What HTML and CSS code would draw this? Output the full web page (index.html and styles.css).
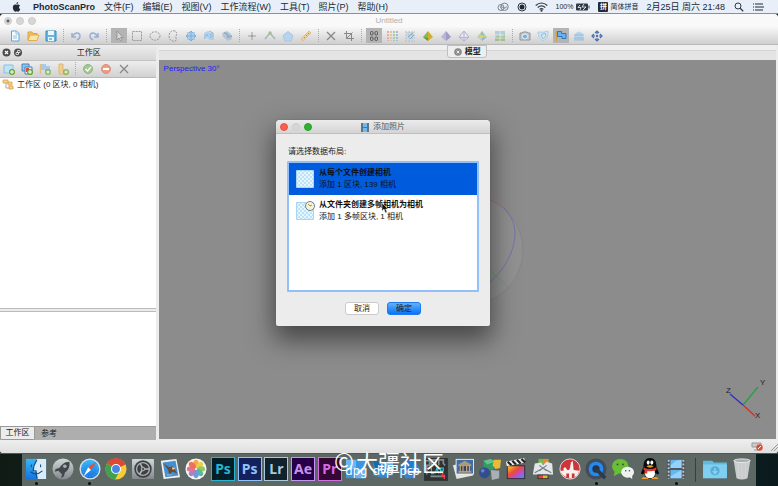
FILE: index.html
```html
<!DOCTYPE html>
<html lang="zh-CN">
<head>
<meta charset="utf-8">
<title>PhotoScanPro</title>
<link rel="stylesheet" href="styles.css">
</head>
<body>
<svg class="defs" aria-hidden="true">
  <defs>
    <pattern id="check" width="4" height="4" patternUnits="userSpaceOnUse"><rect width="4" height="4" fill="#e6f6fe"/><path d="M0 0h2v2H0zM2 2h2v2H2z" fill="#bde2f8"/></pattern>
    <linearGradient id="silver" x2="0" y2="1"><stop stop-color="#d3d7da"/><stop offset="1" stop-color="#81878b"/></linearGradient>
    <linearGradient id="sky" x2="0" y2="1"><stop stop-color="#35b8f8"/><stop offset="1" stop-color="#1673df"/></linearGradient>
    <linearGradient id="rain" x2="1" y2="1"><stop stop-color="#f3d02c"/><stop offset=".4" stop-color="#ed4937"/><stop offset=".7" stop-color="#b44fd6"/><stop offset="1" stop-color="#3c9af2"/></linearGradient>
    <symbol id="plus" viewBox="0 0 6 6"><circle cx="3" cy="3" r="3" fill="#68a832"/><path d="M3 1v4M1 3h4" stroke="#fff"/></symbol>
  </defs>
</svg>
<div class="desktop">
  <header class="menubar">
    <svg class="apple" viewBox="0 0 10 11"><path d="M6.800 0C5.600.2 4.900 1.100 5 2.300 6.100 2.300 6.900 1.300 6.800 0ZM8.900 3.700C7.700 2.200 6.200 2.600 5.200 3 4 2.500 2.600 2.400 1.600 3.600.2 5.400 1 8.600 2.700 10.300 3.500 11 4.200 10.600 5.200 10.300 6.200 10.600 7 11 7.800 10.200 8.400 9.600 9 8.700 9.200 8 7.400 7.200 7.300 4.800 8.900 3.700Z" fill="#222b36"/></svg>
    <nav class="menus">
      <a class="app" href="#">PhotoScanPro</a><a href="#">文件(F)</a><a href="#">编辑(E)</a><a href="#">视图(V)</a><a href="#">工作流程(W)</a><a href="#">工具(T)</a><a href="#">照片(P)</a><a href="#">帮助(H)</a>
    </nav>
    <div class="tray">
      <svg width="12" height="10" viewBox="0 0 12 10" fill="none" stroke="#7b838d"><circle cx="4" cy="5.500" r="3"/><circle cx="7.500" cy="4.800" r="3.700"/><path d="M3 5.500q1-2 3 0t4-1"/></svg>
      <svg width="10" height="10" viewBox="0 0 10 10"><circle cx="5" cy="5" r="4" fill="none" stroke="#303844"/><circle cx="5" cy="5" r="2.500" fill="#202833"/></svg>
      <svg width="13" height="10" viewBox="0 0 13 10" fill="none" stroke="#303844" stroke-width="1.200"><path d="M.7 3.500q5.800-5 11.600 0M2.700 5.500q3.800-3.300 7.600 0M4.600 7.400q1.900-1.600 3.800 0"/><circle cx="6.500" cy="8.700" r=".5"/></svg>
      <span class="battery">100%<svg width="14" height="8" viewBox="0 0 14 8"><rect y=".5" width="12" height="7" rx="1" fill="#303844"/><path d="M13 2.500v3" stroke="#303844"/><path d="M4 2 2 4.500h3L4 7M8 1 6 4h4L7 7" stroke="#fff" fill="none" stroke-width=".8"/></svg></span>
      <span class="ime"><b>拼</b>简体拼音</span>
      <time>2月25日 周六 21:48</time>
      <svg class="search" width="10" height="10" viewBox="0 0 10 10" fill="none" stroke="#303844"><circle cx="4" cy="4" r="3"/><path d="m6.200 6.200 3 3" stroke-width="1.300"/></svg>
      <svg width="12" height="10" viewBox="0 0 12 10" stroke="#202833" stroke-width="1.200"><path d="M3 2h8M3 5h9M3 8h8M1 2h1M1 5h1M1 8h1"/></svg>
    </div>
  </header>

  <main class="window">
    <div class="titlebar"><div class="lights"><i class="edited"></i><i></i><i></i></div><h1>Untitled</h1></div>
    <div class="toolbar" role="toolbar">
      <button aria-label="新建"><svg viewBox="0 0 12 12"><path d="M2.500 1h5L10 3.500V11H2.500z" fill="#f3fbff" stroke="#63a5c9"/><path d="M7 1v3h3M4 6h4M4 8h4" stroke="#8fc4df" fill="none"/></svg></button>
      <button aria-label="打开"><svg viewBox="0 0 12 12"><path d="M1 10V2h4l1 1.500h4V6" fill="#eebe65" stroke="#d9a343"/><path d="M1 10.500 3 5h9l-2 5.500z" fill="#fae5a9" stroke="#dfad52"/></svg></button>
      <button aria-label="保存"><svg viewBox="0 0 12 12"><path d="M1 1h10v10H1z" fill="#6bb5dd" stroke="#3b8cbc"/><path d="M3 1h6v4H3zM3 7h6v4H3z" fill="#eaf7ff"/><path d="M4 9h3" stroke="#307ca8"/></svg></button>
      <i class="sep"></i>
      <button aria-label="撤销"><svg viewBox="0 0 12 12"><path d="M2 3v4h4M2.500 6.500C5 2 10 2 10 6c0 2-1 3-3 4" fill="none" stroke="#97afd8" stroke-width="1.500"/></svg></button>
      <button aria-label="重做"><svg viewBox="0 0 12 12"><path d="M10 3v4H6M9.500 6.500C7 2 2 2 2 6c0 2 1 3 3 4" fill="none" stroke="#97afd8" stroke-width="1.500"/></svg></button>
      <i class="sep"></i>
      <button class="on" aria-label="选择"><svg viewBox="0 0 12 12"><path d="M4 1v9l2-2 1.500 3L9 10 7.500 7.500H10z" fill="#dadada" stroke="#8b8b8b" stroke-width=".8"/></svg></button>
      <button aria-label="矩形"><svg viewBox="0 0 12 12"><path d="M1.500 1.500h9v9h-9z" fill="none" stroke="#999" stroke-dasharray="2 1"/></svg></button>
      <button aria-label="椭圆"><svg viewBox="0 0 12 12"><ellipse cx="6" cy="6" rx="5" ry="4.200" fill="none" stroke="#999" stroke-dasharray="2 1"/></svg></button>
      <button aria-label="套索"><svg viewBox="0 0 12 12"><path d="M8 1C4 0 2 3 2 6s2 6 6 5c3-1 0-3 1-5s1-4-1-5Z" fill="none" stroke="#999" stroke-dasharray="2 1"/></svg></button>
      <button class="dim" aria-label="移动"><svg viewBox="0 0 12 12"><path d="M2 2h8v8H2z" fill="#9fc9ef"/><path d="M6 1v10M1 6h10M4 3l2-2 2 2M4 9l2 2 2-2M3 4 1 6l2 2M9 4l2 2-2 2" fill="none" stroke="#6a9fd0"/></svg></button>
      <button class="dim" aria-label="旋转"><svg viewBox="0 0 12 12"><path d="m1 3 4-2 6 5v4H7L1 6z" fill="#a3cdf0"/><path d="M2 9q-1-4 3-4M10 3q1 4-3 4M6 1l4 2-3 2" fill="none" stroke="#79a6cf"/></svg></button>
      <button class="dim" aria-label="缩放"><svg viewBox="0 0 12 12"><path d="m1 3 5-2 4 3 1 5-4 2-5-4z" fill="#a7c0d8"/><path d="M3 3q4 0 4 4l4-1" fill="none" stroke="#7f9bb2" stroke-width="1.500"/></svg></button>
      <i class="sep"></i>
      <button aria-label="点"><svg viewBox="0 0 12 12"><path d="M6 2v3M6 7v3M2 6h3M7 6h3" stroke="#a0a0a0"/><circle cx="6" cy="6" r="1" fill="#888"/></svg></button>
      <button aria-label="折线"><svg viewBox="0 0 12 12"><path d="m1 9 5-6 5 6" fill="none" stroke="#9fb7b9" stroke-width="1.400"/><circle cx="6" cy="3" r="1.700" fill="#a6bd9a"/></svg></button>
      <button aria-label="多边形"><svg viewBox="0 0 12 12"><path d="m6 1.500 5 4L9 11H3L1 5.500z" fill="#b6d4ef" stroke="#a5c7e0"/></svg></button>
      <button aria-label="标尺"><svg viewBox="0 0 12 12"><path d="m1 9 8-8 2 2-8 8z" fill="#efd092" stroke="#e3bd80"/><path d="m4 7 1 1M6 5l1 1M8 3l1 1" stroke="#b98e44"/></svg></button>
      <i class="sep"></i>
      <button aria-label="删除"><svg viewBox="0 0 12 12"><path d="m2 2 8 8M10 2 2 10" stroke="#888" stroke-width="1.300"/></svg></button>
      <button aria-label="裁剪"><svg viewBox="0 0 12 12"><path d="M3.500 1v7.500H11M1 3.500h7.500V11M3.500 8.500l6-6" fill="none" stroke="#888"/></svg></button>
      <i class="sep"></i>
      <button class="on" aria-label="点云"><svg viewBox="0 0 12 12"><g fill="none" stroke="#555"><rect x="2.500" y="1.500" width="2.500" height="3.500" rx="1"/><rect x="7" y="1.500" width="2.500" height="3.500" rx="1"/><rect x="2.500" y="7" width="2.500" height="3.500" rx="1"/><rect x="7" y="7" width="2.500" height="3.500" rx="1"/></g></svg></button>
      <button aria-label="密集点云"><svg viewBox="0 0 12 12"><path d="M2 1v10" stroke="#e7adad" stroke-width="2" stroke-dasharray="2 1"/><path d="M5 1v10" stroke="#dcc99b" stroke-width="2" stroke-dasharray="2 1"/><path d="M8 1v10" stroke="#a9cba6" stroke-width="2" stroke-dasharray="2 1"/><path d="M11 1v10" stroke="#a4bddf" stroke-width="2" stroke-dasharray="2 1"/></svg></button>
      <button aria-label="分类"><svg viewBox="0 0 12 12"><path d="M2 2h8v8H2z" fill="#cdd8df"/><path d="M1 2h10M1 5h10M1 8h10M1 11h10" stroke="#b3bec5" stroke-dasharray="2 1"/><path d="m4 7 5-4M6 9l4-4" stroke="#76abd1"/></svg></button>
      <button aria-label="着色"><svg viewBox="0 0 12 12"><path d="M6 1 1 7l5 4z" fill="#86b958"/><path d="m6 1 5 6-5 4z" fill="#d2ae32"/><path d="m1 7 5 1v3z" fill="#5f983b"/></svg></button>
      <button aria-label="实体"><svg viewBox="0 0 12 12"><path d="M6 1 1 7l5 4z" fill="#bbb4da"/><path d="m6 1 5 6-5 4z" fill="#a29bc8"/></svg></button>
      <button aria-label="线框"><svg viewBox="0 0 12 12"><path d="M6 1 1 7l5 4 5-4zM1 7l5 1 5-1M6 1v10" fill="#e9e7f0" stroke="#b4afd0"/></svg></button>
      <button aria-label="纹理"><svg viewBox="0 0 12 12"><path d="m6 1 5 6-5 4-5-4z" fill="#bfd298"/><path d="m6 1 2 5-4 2zM6 8l5-1-5 4z" fill="#83b8d8"/><path d="M4 5h3v3H4z" fill="#ecc979"/></svg></button>
      <button aria-label="瓦片"><svg viewBox="0 0 12 12"><path d="M1 1h10v10H1z" fill="#b5cedd"/><path d="M1 8q3-5 5-2t5-3v8H1z" fill="#a4bf8f"/><path d="M1 5h10M1 8h10M6 1v10" stroke="#eee" stroke-width=".7"/></svg></button>
      <i class="sep"></i>
      <button aria-label="相机"><svg viewBox="0 0 12 12"><path d="M1 3h2l1-1h4l1 1h2v7H1z" fill="#c3c9cc" stroke="#909598"/><circle cx="6" cy="6.500" r="2.500" fill="#78aee0" stroke="#eee"/></svg></button>
      <button aria-label="区域"><svg viewBox="0 0 12 12"><path d="M1 2q5 1 10-1 1 7-5 10Q1 8 1 2Z" fill="#cfe4f2" stroke="#b0cfe3"/><path d="m4 5 4-2 1 3-3 3z" fill="none" stroke="#9ac0d8"/></svg></button>
      <button class="on" aria-label="标记"><svg viewBox="0 0 12 12"><path d="M1.500 1v10" stroke="#d6a13e" stroke-width="1.500"/><path d="M2.500 1.500h4v2h4.500v5H7v-2H2.500z" fill="#69b0f4" stroke="#2d78c5"/></svg></button>
      <button aria-label="图层"><svg viewBox="0 0 12 12"><path d="M2 4q4-5 8 0l1 6H1z" fill="#bad5e8"/><path d="M1 5h10M1 8h10M1 10h10" stroke="#94bbd8"/></svg></button>
      <button aria-label="重置视图"><svg viewBox="0 0 12 12"><path d="M6 1v10M1 6h10M4 3l2-2 2 2M4 9l2 2 2-2M3 4 1 6l2 2M9 4l2 2-2 2" fill="none" stroke="#4c6faf" stroke-width="1.200"/><path d="M4 4h4v4H4z" fill="#e0e0e0"/><circle cx="6" cy="6" r="1.200" fill="#4c6faf"/></svg></button>
    </div>

    <div class="content">
      <aside class="sidebar">
        <div class="pane-head"><svg width="20" height="9" viewBox="0 0 20 9"><circle cx="4.500" cy="4.500" r="4" fill="#4b4b4b"/><circle cx="16" cy="4.500" r="4" fill="#4b4b4b"/><path d="m3 3 3 3M6 3 3 6" stroke="#fff" stroke-width="1.200"/><path d="M15.500 2.500h2.500v2h-2.500zM14 4.500h2.500v2H14z" stroke="#fff" stroke-width=".7" fill="none"/></svg><h2>工作区</h2></div>
        <div class="pane-tools">
          <button aria-label="添加堆块"><svg viewBox="0 0 12 12"><path d="M1 2h9v8H1z" fill="#bde5f8" stroke="#8ac2dc"/><use href="#plus" x="6" y="6" width="6" height="6"/></svg></button>
          <button aria-label="添加照片"><svg viewBox="0 0 12 12"><path d="M1 1h7v7H1z" fill="#86c5f4" stroke="#4983ba"/><path d="M4 4h7v7H4z" fill="#e5f0fa" stroke="#4983ba"/><path d="M5 5h3v4H5z" fill="#d74b3c"/><use href="#plus" x="6" y="6" width="6" height="6"/></svg></button>
          <button aria-label="添加标记"><svg viewBox="0 0 12 12"><path d="M1.500 1v10" stroke="#e1c078" stroke-width="1.500"/><path d="M2 1h5v2h4v5H6V7H2z" fill="#a8c9e8"/><use href="#plus" x="6" y="6" width="6" height="6" opacity=".7"/></svg></button>
          <button aria-label="添加比例尺"><svg viewBox="0 0 12 12"><path d="M2 1h4v7h4v3H2z" fill="#f0cf90" stroke="#dfb973"/><use href="#plus" x="6" y="6" width="6" height="6" opacity=".7"/></svg></button>
          <i class="sep"></i>
          <button aria-label="启用"><svg viewBox="0 0 12 12"><circle cx="6" cy="6" r="4.500" fill="#a4c895" stroke="#8fb680"/><path d="m3.500 6 2 2L9 4" fill="none" stroke="#fff" stroke-width="1.300"/></svg></button>
          <button aria-label="禁用"><svg viewBox="0 0 12 12"><circle cx="6" cy="6" r="4.500" fill="#ed9c86" stroke="#df8d77"/><path d="M3 6h6" stroke="#fff" stroke-width="2"/></svg></button>
          <button aria-label="移除"><svg viewBox="0 0 12 12"><path d="m2 2 8 8M10 2 2 10" stroke="#888" stroke-width="1.300"/></svg></button>
        </div>
        <div class="tree"><svg width="11" height="11" viewBox="0 0 11 11"><path d="M3 4v5h4" fill="none" stroke="#aaa"/><path d="M0 1h5v3H0zM5 3h4v3H5zM6 7h4v3H6z" fill="#f5d28b" stroke="#d6a34c" stroke-width=".8"/></svg><span>工作区 (0 区块, 0 相机)</span></div>
        <div class="details"></div>
        <div class="pane-tabs"><button class="current">工作区</button><button>参考</button></div>
      </aside>
      <section class="viewer">
        <div class="doc-tabs"><button class="doc-tab"><svg width="8" height="8" viewBox="0 0 8 8"><circle cx="4" cy="4" r="3.800" fill="#8a8a8a"/><path d="m2.600 2.600 2.800 2.800M5.400 2.600 2.600 5.400" stroke="#eee"/></svg>模型</button></div>
        <div class="canvas">
          <span>Perspective 30°</span>
          <svg class="ball" viewBox="0 0 120 120" fill="none"><circle cx="61" cy="60" r="55" fill="#919191" stroke="#868686"/><path d="M83 10q8 3 14 8" stroke="#a27878"/><path d="M97 18c8 9 11 17 11 25 0 19-12 38-25 49" stroke="#7474aa"/><path d="m83 80 19 18" stroke="#6f9a6f"/></svg>
          <svg class="axes" viewBox="0 0 45 46"><path d="m20 29 15-18" stroke="#20a338" stroke-width="1.200"/><path d="M20 29 7 18" stroke="#292bc3" stroke-width="1.200"/><path d="m20 29 12 11" stroke="#d22e22" stroke-width="1.200"/><text x="3" y="17">Z</text><text x="37" y="9">Y</text><text x="32" y="42">X</text></svg>
        </div>
      </section>
    </div>
    <footer class="status"><svg width="11" height="9" viewBox="0 0 11 9"><path d="M0 1h9v4H0zM2 8h5" fill="#ccc" stroke="#999"/><circle cx="7.500" cy="5.500" r="3.200" fill="#e14d30"/><path d="m6 7 3-3" stroke="#fff"/></svg><svg width="8" height="8" viewBox="0 0 8 8"><path d="m1 8 7-7M4 8l4-4" stroke="#999"/></svg></footer>
  </main>

  <footer class="shelf">
    <nav class="dock">
      <a class="running" href="#" aria-label="Finder"><svg viewBox="0 0 24 24"><path d="M1 1h22v22H1z" fill="url(#sky)"/><path d="M13 1h10v22h-9q-1-4-1-8H9q0-8 4-14" fill="#dcecf6"/><path d="M6 15q6 5 13-1M7 7v3M17 7v3M13 2Q9 8 9 14h3q0 4 1 8" fill="none" stroke="#155083" stroke-width="1.200"/></svg></a>
      <a href="#" aria-label="Launchpad"><svg viewBox="0 0 24 24"><circle cx="12" cy="12" r="11.500" fill="url(#silver)"/><path d="M19 4c-6 0-9 4-11 7l-4 1-1 3 4-1 4 4-1 4 3-2 1-4c3-2 6-6 5-12Z" fill="#41484c"/><circle cx="14" cy="9" r="2" fill="#a6acb0"/></svg></a>
      <a class="running" href="#" aria-label="Safari"><svg viewBox="0 0 24 24"><circle cx="12" cy="12" r="11.500" fill="#dbe3e8"/><circle cx="12" cy="12" r="10" fill="url(#sky)"/><circle cx="12" cy="12" r="8" fill="none" stroke="#5fbcf5" stroke-dasharray="1 2"/><path d="m19 4-6 9-3-3z" fill="#ed493a"/><path d="m10 10 3 3-8 7z" fill="#fff"/></svg></a>
      <a href="#" aria-label="Chrome"><svg viewBox="0 0 24 24"><circle cx="12" cy="12" r="11.500" fill="#f6cd38"/><path d="M12 12 2 6a11.500 11.500 0 0 1 20.500 1z" fill="#dd4837"/><path d="M2 6a11.500 11.500 0 0 0 9 17.500L15 16l-3-4z" fill="#40a14f"/><circle cx="12" cy="12" r="5.500" fill="#fff"/><circle cx="12" cy="12" r="4.300" fill="#4687e8"/></svg></a>
      <a href="#" aria-label="系统偏好设置"><svg viewBox="0 0 24 24"><rect x="0" y="1" width="24" height="22" rx="1" fill="url(#silver)"/><circle cx="12" cy="12" r="9.500" fill="#3c4043"/><circle cx="12" cy="12" r="7" fill="none" stroke="#a9adaf" stroke-width="1.500"/><path d="M12 12 9 6M12 12l7 0M12 12l-4 6" stroke="#b8bbbc" stroke-width="1.600"/><circle cx="12" cy="12" r="2" fill="#555" stroke="#bbb"/></svg></a>
      <a href="#" aria-label="邮件"><svg viewBox="0 0 24 24"><path d="m2 3 17-2 4 20-18 2z" fill="#eef0f2"/><path d="m4 5 14-2 3 16-14 2z" fill="#458ed3"/><path d="m5 6 6 4 4-1 3 5 2 3-5-2-4 3-1-5z" fill="#684e31"/><path d="m8 17 8 1-7 2z" fill="#7aa6c9"/><path d="m14 10 4 1-3 2z" fill="#eed9a3"/></svg></a>
      <a href="#" aria-label="照片"><svg viewBox="0 0 24 24"><circle cx="12" cy="12" r="11.500" fill="#f5f5f2"/><g opacity=".88"><ellipse cx="12" cy="6.500" rx="3" ry="4.500" fill="#f6a02b"/><ellipse cx="12" cy="6.500" rx="3" ry="4.500" fill="#e8cd2c" transform="rotate(45 12 12)"/><ellipse cx="12" cy="6.500" rx="3" ry="4.500" fill="#86c44c" transform="rotate(90 12 12)"/><ellipse cx="12" cy="6.500" rx="3" ry="4.500" fill="#4bad92" transform="rotate(135 12 12)"/><ellipse cx="12" cy="6.500" rx="3" ry="4.500" fill="#5792d8" transform="rotate(180 12 12)"/><ellipse cx="12" cy="6.500" rx="3" ry="4.500" fill="#9d73c0" transform="rotate(225 12 12)"/><ellipse cx="12" cy="6.500" rx="3" ry="4.500" fill="#d9658d" transform="rotate(270 12 12)"/><ellipse cx="12" cy="6.500" rx="3" ry="4.500" fill="#ed614a" transform="rotate(315 12 12)"/></g></svg></a>
      <a href="#"><span class="adobe ps">Ps</span></a>
      <a href="#"><span class="adobe ps2">Ps</span></a>
      <a href="#"><span class="adobe lr">Lr</span></a>
      <a href="#"><span class="adobe ae">Ae</span></a>
      <a href="#"><span class="adobe pr">Pr</span></a>
      <a class="named" href="#"><svg viewBox="0 0 24 24"><path d="M1 2h22v20H1z" fill="#3b96e2"/><path d="M1 2h11v10H1zM12 12h11v10H12z" fill="#68b8f3"/></svg><span>dpg</span></a>
      <a class="named" href="#"><svg viewBox="0 0 24 24"><path d="m1 2 11 4 11-4v17l-11 3-11-3z" fill="#3387cb"/><path d="m1 2 11 4-8 8z" fill="#1768ad"/><path d="m12 6 11-4v17z" fill="#63b4ed"/></svg><span>dvp</span></a>
      <a class="named" href="#"><svg viewBox="0 0 24 24"><path d="M7 2h10l6 10-6 10H7L1 12z" fill="#3384d2"/><path d="M7 2h10l-4 11-12-1z" fill="#257acb"/></svg><span>pcp</span></a>
      <a href="#" aria-label="Lapse"><svg viewBox="0 0 24 24"><path d="M-1 0h26v25H-1z" fill="#2e3435"/><path d="M1 3h4v5H1M7 8V2h5v6M15 8V2h5v4l2 2M2 18V9M6 20h15" fill="none" stroke="#858b8b" stroke-width="1.800"/><path d="M7 11v6h3M11 17l2-6 2 6M17 17v-6h3v3h-3" fill="none" stroke="#38bcc0" stroke-width="1.300"/><path d="m20 16-2 4h4M21 18v5" fill="none" stroke="#e74858" stroke-width="1.300"/></svg></a>
      <a href="#" aria-label="预览"><svg viewBox="0 0 24 24"><path d="M1 8 20 4l3 15-18 4z" fill="#e3e3df"/><path d="M4 1h20v17H4z" fill="#eee"/><path d="M5 2h18v15H5z" fill="#416ea7"/><path d="m7 7 7-4 7 4v2H7zM7 14h14v2H7z" fill="#ad9878"/><path d="M8 9h12v5H8z" fill="#3d4350"/><path d="M9 8v7M12 8v7M16 8v7M19 8v7" stroke="#c0aa86" stroke-width="1.300"/></svg></a>
      <a href="#" aria-label="PhotoScan"><svg viewBox="0 0 24 24"><path d="m5 3 8-2 4 3v8l-8 2-4-3z" fill="#359b65"/><path d="m13 1 4 3-8 3-4-4z" fill="#63c48c"/><path d="M16 2h8l-1 9-5 1-3-4z" fill="#ebba34"/><path d="m13 13 9 1v8l-8 2z" fill="#a9afb2"/><circle cx="6" cy="16" r="6" fill="#304e91"/><circle cx="4" cy="14" r="2" fill="#6683c0"/></svg></a>
      <a href="#" aria-label="Final Cut Pro"><svg viewBox="0 0 24 24"><path d="M2 8h20v15H2z" fill="#292a2d"/><path d="M3 9h18v13H3z" fill="url(#rain)"/><path d="m1 4 20-4 1 5L2 9z" fill="#eee"/><path d="m3 4 4 4M8 3l4 4M13 2l4 4M18 1l4 4" stroke="#222" stroke-width="2.400"/></svg></a>
      <a href="#" aria-label="Compressor"><svg viewBox="0 0 24 24"><path d="M7 1h11v6H7z" fill="#76b948"/><path d="M12 1h6v6h-6z" fill="#e8892f"/><path d="m3 6 7-1 2 3 4-4 6 2 1 12H1z" fill="#e3e6e8"/><path d="M6 18h12v5H6z" fill="#303436"/><path d="M7 19h5v3H7z" fill="#e5482f"/><path d="M12 19h5v3h-5z" fill="#edb32f"/><path d="m3 16 9-5 9 5M8 8l8 6M8 14l8-6" fill="none" stroke="#737b80" stroke-width="1.200"/></svg></a>
      <a href="#" aria-label="DJI"><svg viewBox="0 0 24 24"><circle cx="12" cy="12" r="11" fill="#ce343b" stroke="#e9dedb"/><path d="M1.500 14H5v-3l2-1 2 3h2l1-2 1-6 2-2 1 10 6 1q-1 5-5 7v-4h-3v5h-3v-5H8v4q-5-2-6.500-7z" fill="#f8f1eb"/></svg></a>
      <a class="running" href="#" aria-label="QuickTime"><svg viewBox="0 0 24 24"><circle cx="12" cy="12" r="11.500" fill="#424c5b"/><circle cx="12" cy="12" r="8" fill="#248af0"/><circle cx="12" cy="12" r="4" fill="#26354b"/><path d="m12 12 10 10" stroke="#2f3b4a" stroke-width="4"/></svg></a>
      <a href="#" aria-label="微信"><svg viewBox="0 0 24 24"><ellipse cx="9" cy="9" rx="9" ry="8" fill="#6abd37"/><path d="m3 14-1 6 7-4" fill="#6abd37"/><ellipse cx="17" cy="15.500" rx="7" ry="6" fill="#f0f2f1"/><path d="m18 20 4 3v-5" fill="#f0f2f1"/><g fill="#334c32"><circle cx="6" cy="7" r="1"/><circle cx="12" cy="7" r="1"/><circle cx="15" cy="14" r=".8"/><circle cx="19" cy="14" r=".8"/></g></svg></a>
      <a href="#" aria-label="QQ"><svg viewBox="0 0 24 24"><path d="M12 0C6 0 5 5 5 9l-3 8 2 1 2-2q0 7 6 7t6-7l2 2 2-1-3-8c0-4-1-9-7-9Z" fill="#080b0d"/><path d="M7 13h10q2 9-5 9t-5-9" fill="#fff"/><path d="M5 10q7 4 14 0v3q-7 3-14 0zM6 13h3v4H6z" fill="#df3830"/><ellipse cx="10" cy="5" rx="1.600" ry="2.300" fill="#fff"/><ellipse cx="14" cy="5" rx="1.600" ry="2.300" fill="#fff"/><path d="M8 9q4-2 8 0-4 3-8 0M3 22q4-3 8 1H3M13 23q4-4 8-1v1" fill="#e9a226"/></svg></a>
      <a class="running" href="#" aria-label="影片"><svg viewBox="0 0 24 24"><path d="M2 1h20v22H2z" fill="#50585e"/><path d="M4 2v21M20 2v21" stroke="#bdc5c9" stroke-width="2" stroke-dasharray="2 2"/><path d="M6 2h12v9H6zM6 13h12v9H6z" fill="#65b7ed"/><path d="m6 8 6-5 6-1v9H6zM6 20l12-7v9H6z" fill="#94d2fb"/></svg></a>
      <i class="divider"></i>
      <a href="#" aria-label="下载"><svg viewBox="0 0 24 24"><path d="M-1 3H9l2 2h14v17H-1z" fill="#61b9e0"/><path d="M-1 7h26v15H-1z" fill="#80cff0"/><circle cx="12" cy="14" r="5" fill="#54add6"/><path d="M12 11v5M9.500 14l2.500 3 2.500-3" stroke="#8cd4f1" fill="none" stroke-width="1.500"/></svg></a>
      <a href="#" aria-label="废纸篓"><svg viewBox="0 0 24 24"><path d="M3 3h18l-3 19q-6 3-12 0z" fill="#c9cccd"/><path d="M8 5v17M12 5v18M16 5v17" stroke="#d3d6d7"/><ellipse cx="12" cy="3" rx="9" ry="2" fill="#aaaeb0" stroke="#e9ebeb"/></svg></a>
    </nav>
  </footer>

  <form class="dialog" role="dialog" aria-labelledby="dialog-title">
    <div class="dialog-bar"><div class="lights"><i class="red"></i><i></i><i class="green"></i></div><h2 id="dialog-title"><svg width="8" height="9" viewBox="0 0 8 9"><path d="M0 0h8v9H0z" fill="#5d7485"/><path d="M2 0h4v4H2zM2 5h4v4H2z" fill="#70b9ee"/></svg>添加照片</h2></div>
    <div class="dialog-body">
      <p id="layout-label">请选择数据布局:</p>
      <ul role="listbox" aria-labelledby="layout-label">
        <li class="selected" role="option" aria-selected="true"><svg viewBox="0 0 18 18"><path d="M.5.5h17v17H.500z" fill="url(#check)" stroke="#a7d7f0"/></svg><div><strong>从每个文件创建相机</strong><span>添加 1 区块, 139 相机</span></div></li>
        <li role="option" aria-selected="false"><svg viewBox="0 0 18 18"><path d="M.5.5h17v17H.500z" fill="url(#check)" stroke="#a7d7f0"/><circle cx="14" cy="4" r="4.500" fill="#f8f1d2" stroke="#5f87a8"/><path d="m12 2 2 2 2-1" stroke="#a88b4b" fill="none"/></svg><div><strong>从文件夹创建多帧相机为相机</strong><span>添加 1 多帧区块, 1 相机</span></div></li>
      </ul>
      <div class="actions"><button type="button">取消</button><button type="submit" class="primary">确定</button></div>
    </div>
  </form>
  <svg class="cursor" viewBox="0 0 8 12"><path d="M1 1v8l2-2 1.500 4L6 10 4.700 7H7z" fill="#111" stroke="#ddd" stroke-width=".6"/></svg>
  <div class="watermark"><span>©</span>大疆社区</div>
</div>
</body>
</html>
```
FILE: styles.css
```css
* { box-sizing: border-box; }
body { margin: 0; font: 8px/12px "Liberation Sans", "Noto Sans CJK SC", sans-serif; color: #222; }
h1, h2, p, ul { margin: 0; padding: 0; font-size: 8px; font-weight: 400; }
a { color: inherit; text-decoration: none; }
button { font: inherit; color: inherit; border: 0; padding: 0; background: none; }
svg { display: block; flex: none; overflow: visible; }
.defs { position: absolute; width: 0; height: 0; }
.desktop { position: relative; display: flex; flex-direction: column; min-height: 100vh; overflow: hidden; background: #13211f; }

.menubar { display: flex; align-items: center; height: 14px; padding: 0 14px 0 12px; background: #e8eff8; border-bottom: 1px solid #8291a6; font-size: 9px; white-space: nowrap; color: #202833; }
.apple { width: 9px; height: 10px; }
.menus { display: flex; gap: 9px; margin-left: 12px; }
.menus .app { font-weight: 700; }
.tray { display: flex; align-items: center; gap: 8px; margin-left: auto; }
.battery { display: flex; align-items: center; gap: 3px; font-size: 7px; }
.ime { display: flex; align-items: center; gap: 2px; font-size: 7px; }
.ime b { width: 10px; height: 10px; line-height: 10px; text-align: center; border-radius: 1px; background: #222a34; color: #fff; }
.search { margin-left: 1px; }

.window { display: flex; flex-direction: column; flex: 1; background: #ececec; border-radius: 4px 4px 3px 3px; overflow: hidden; }
.titlebar { position: relative; height: 13px; background: #f9f9f9; }
.titlebar h1 { text-align: center; line-height: 14px; color: #b0b0b0; }
.lights { position: absolute; left: 4px; top: 3px; display: flex; gap: 4px; }
.lights i { width: 8px; height: 8px; border-radius: 50%; background: #d7d7d7; border: 1px solid #cccccc; }
.lights .edited { background: radial-gradient(#666 0 1px, #d7d7d7 2px); }
.lights .red { background: #fa5e51; border-color: #eb5146; }
.lights .green { background: #2fb32c; border-color: #28a127; }
.toolbar { display: flex; height: 18px; padding: 1px 6px; background: linear-gradient(#f7f7f7, #cfcfcf); border-bottom: 1px solid #b9b9b9; }
.toolbar button, .pane-tools button { display: grid; place-items: center; flex: none; width: 18px; }
.toolbar svg, .pane-tools svg { width: 12px; height: 12px; }
.toolbar .dim { opacity: .8; }
.toolbar .on { background: linear-gradient(90deg, transparent 1px, #b4b4b4 1px 17px, transparent 17px); }
.sep { flex: none; width: 7px; margin: 1px 0; background: repeating-linear-gradient(#aaa 0 1px, transparent 1px 2px) center / 1px 100% no-repeat; }

.content { display: flex; flex: 1; }
.sidebar { display: flex; flex-direction: column; width: 20%; }
.pane-head { display: flex; align-items: center; height: 15px; padding-left: 2px; background: linear-gradient(#ededed, #d6d6d6); }
.pane-head h2 { flex: 1; text-align: center; }
.pane-tools { display: flex; height: 18px; border-top: 1px solid #c3c3c3; border-bottom: 1px solid #b8b8b8; background: linear-gradient(#eee, #d1d1d1); }
.tree { display: flex; align-items: flex-start; gap: 3px; flex: 232; padding: 1px 3px; background: #fff; border-bottom: 1px solid #bbb; }
.details { flex: 116; margin-top: 2px; background: #fff; border-top: 1px solid #bbb; }
.pane-tabs { display: flex; height: 14px; background: #aeaeae; border-top: 1px solid #999; }
.pane-tabs button { width: 28px; }
.pane-tabs .current { width: 35px; background: #ececec; border: 1px solid #999; border-top: 0; border-radius: 0 0 2px 2px; }
.viewer { display: flex; flex-direction: column; flex: 1; margin: 0 2px 1px 3px; }
.doc-tabs { height: 15px; background: linear-gradient(#efefef 0 5px, #d4d4d4 5px 6px, #e4e4e4 6px); }
.doc-tab { display: flex; align-items: center; justify-content: center; gap: 3px; width: 40px; height: 13px; margin: 0 auto; border: 1px solid #bebebe; border-radius: 0 0 3px 3px; background: #eee; font-weight: 700; }
.canvas { position: relative; flex: 1; padding: 3px 5px; background: #8c8c8c; color: #2222ed; }
.ball { position: absolute; left: calc(50% - 60px); top: calc(50% - 60px); width: 120px; height: 120px; }
.axes { position: absolute; right: 8px; bottom: 17px; width: 45px; height: 46px; font-size: 8px; fill: #222; }
.status { display: flex; align-items: center; justify-content: flex-end; gap: 7px; height: 13px; background: linear-gradient(#eee, #dfdfdf); }

.shelf { padding: 0 22px; background: linear-gradient(90deg, #101b16, #20302c 50%, #0b1a1c); border-top: 1px solid #4d5955; }
.dock { display: flex; height: 32px; padding: 0 1px; background: #5d6865; }
.dock a { position: relative; display: flex; justify-content: center; flex: 1 1 0; min-width: 0; padding-top: 4px; }
.dock svg { width: 22px; height: 22px; }
.dock .running::after { content: ""; position: absolute; bottom: 1px; width: 3px; height: 3px; border-radius: 50%; background: #080c0c; }
.adobe { flex: none; width: 24px; height: 24px; margin-top: -1px; border: 1px solid; text-align: center; font: 700 14px/22px "Noto Sans", sans-serif; }
.ps { color: #28b5d5; background: #031e27; }
.ps2 { color: #91c1fa; background: #13225d; }
.lr { color: #a7c9d9; background: #12212c; }
.ae { color: #c393ed; background: #250048; }
.pr { color: #d66ce4; background: #340736; }
.named span { position: absolute; top: 11px; color: #fff; font: 12px/12px "Noto Sans", sans-serif; }
.divider { width: 12px; margin: 4px 0; background: linear-gradient(#35403e, #35403e) center / 1px 100% no-repeat; }

.dialog { position: absolute; left: calc(50% - 113px); top: 120px; width: 214px; border-radius: 4px 4px 2px 2px; overflow: hidden; background: #ececec; box-shadow: 0 0 1px #555, 0 12px 26px 2px rgba(0, 0, 0, .5); }
.dialog-bar { position: relative; height: 14px; border-bottom: 1px solid #bfbfbf; background: linear-gradient(#ececec, #d4d4d4); }
.dialog-bar h2 { display: flex; align-items: center; justify-content: center; gap: 4px; line-height: 14px; color: #555; }
.dialog-body { padding: 12px 11px 11px; }
.dialog-body p { padding-left: 1px; }
.dialog ul { height: 131px; margin: 3px 0 10px; border: 2px solid #93c0fb; border-radius: 1px; background: #fff; list-style: none; }
.dialog li { display: flex; align-items: center; gap: 5px; height: 32px; padding-left: 7px; color: #111; }
.dialog li svg { width: 18px; height: 18px; }
.dialog .selected { background: #005cdc; }
.dialog strong, .dialog li span { display: block; }
.actions { display: flex; justify-content: center; gap: 8px; }
.actions button { width: 34px; height: 13px; border: 1px solid #cbcbcb; border-radius: 3px; background: #fff; line-height: 11px; }
.actions .primary { border-color: #1b7bf0; background: linear-gradient(#62b1fb, #0a73f7); }
.cursor { position: absolute; left: 381px; top: 202px; width: 8px; height: 12px; }
.watermark { position: absolute; left: 334px; top: 449px; display: flex; color: #fff; font: 22px/24px "Noto Sans CJK SC", sans-serif; }
.watermark span { width: 22px; font-size: 24px; }
```
